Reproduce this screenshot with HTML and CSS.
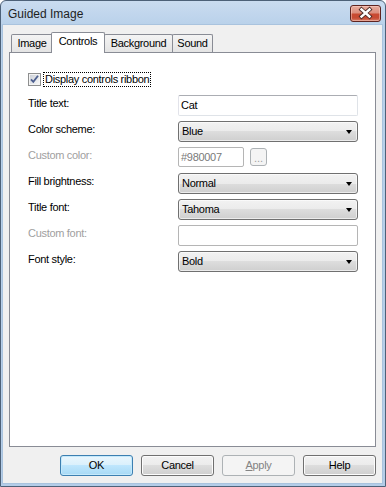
FILE: index.html
```html
<!DOCTYPE html>
<html lang="en">
<head>
  <meta charset="UTF-8" />
  <title>Guided Image</title>
  <link rel="stylesheet" href="styles.css">
</head>
<body>
  <div class="window">
    <div class="titlebar">
      <span class="title">Guided Image</span>
      <div class="close-btn">
        <svg width="31" height="17" viewBox="0 0 31 17">
          <path d="M11.5 4.5 L19.5 11.5 M19.5 4.5 L11.5 11.5" stroke="#4a2a26" stroke-width="4.2" stroke-linecap="square" fill="none"/>
          <path d="M11.5 4.5 L19.5 11.5 M19.5 4.5 L11.5 11.5" stroke="#ffffff" stroke-width="2.4" stroke-linecap="square" fill="none"/>
        </svg>
      </div>
    </div>

    <div class="client">
      <div class="tabs">
        <div class="tab tab-image">Image</div>
        <div class="tab tab-controls active">Controls</div>
        <div class="tab tab-background">Background</div>
        <div class="tab tab-sound">Sound</div>
      </div>

      <div class="panel">
        <div class="check-row">
          <span class="checkbox">
            <svg width="13" height="13" viewBox="0 0 13 13">
              <defs>
                <linearGradient id="cbfill" x1="0" y1="0" x2="1" y2="1">
                  <stop offset="0" stop-color="#cdd1d8"/>
                  <stop offset="1" stop-color="#f7f7f7"/>
                </linearGradient>
              </defs>
              <rect x="0.5" y="0.5" width="12" height="12" fill="#f4f4f4" stroke="#8e8f8f"/>
              <rect x="2" y="2" width="9" height="9" fill="url(#cbfill)"/>
              <path d="M3 6.3 L5.3 8.8 L10 2.8" stroke="#4d5f8f" stroke-width="1.8" fill="none"/>
            </svg>
          </span>
          <span class="check-label">Display controls ribbon</span>
        </div>

        <div class="form">
          <div class="label">Title text:</div>
          <div class="textbox">Cat</div>

          <div class="label">Color scheme:</div>
          <div class="combo"><span>Blue</span><span class="arrow"></span></div>

          <div class="label disabled">Custom color:</div>
          <div class="color-row">
            <div class="textbox small disabled">#980007</div>
            <div class="dots-btn">...</div>
          </div>

          <div class="label">Fill brightness:</div>
          <div class="combo"><span>Normal</span><span class="arrow"></span></div>

          <div class="label">Title font:</div>
          <div class="combo"><span>Tahoma</span><span class="arrow"></span></div>

          <div class="label disabled">Custom font:</div>
          <div class="textbox disabled"></div>

          <div class="label">Font style:</div>
          <div class="combo"><span>Bold</span><span class="arrow"></span></div>
        </div>
      </div>

      <div class="buttons">
        <div class="btn default">OK</div>
        <div class="btn">Cancel</div>
        <div class="btn disabled"><u>A</u>pply</div>
        <div class="btn">Help</div>
      </div>
    </div>
  </div>
</body>
</html>
```

FILE: styles.css
```css
* {
  box-sizing: border-box;
}

body {
  margin: 0;
  background: #fff;
  font-family: "Liberation Sans", Arial, sans-serif;
  font-size: 11px;
  letter-spacing: -0.3px;
  color: #000;
}

.window {
  width: 386px;
  height: 487px;
  border: 1px solid #4d6178;
  border-radius: 6px 6px 0 0;
  background: linear-gradient(#cadcf0, #b9d1ea 24px, #b4cde8);
  display: flex;
  flex-direction: column;
  padding: 0 3px 3px 2px;
}

.titlebar {
  height: 24px;
  display: flex;
  justify-content: space-between;
  align-items: flex-start;
  padding-left: 5px;
}

.title {
  font-size: 12px;
  letter-spacing: 0;
  line-height: 14px;
  margin-top: 6px;
  color: #1e1e1e;
}

.close-btn {
  width: 31px;
  height: 17px;
  margin-top: 4px;
  margin-right: 1px;
  border: 1px solid #5e2420;
  border-radius: 3px;
  background: linear-gradient(#e8ac9e 0%, #dc8f7e 45%, #c94a31 55%, #c64b33 80%, #d9806a 100%);
  box-shadow: inset 0 0 0 1px rgba(255, 220, 210, 0.45);
  display: flex;
  align-items: center;
  justify-content: center;
}

.close-btn svg {
  display: block;
  margin: -1px;
}

.client {
  flex: 1;
  background: #f0f0f0;
  box-shadow: 0 0 0 1px #a9c3de;
  padding: 7px 6px 7px 6px;
  display: flex;
  flex-direction: column;
}

/* tab strip */
.tabs {
  height: 20px;
  display: flex;
  align-items: flex-end;
  padding-left: 2px;
}

.tab {
  height: 18px;
  border: 1px solid #898c95;
  border-bottom: none;
  background: linear-gradient(#f4f4f4, #e4e4e4);
  text-align: center;
  padding-top: 2px;
  line-height: 13px;
  margin-left: -1px;
  border-radius: 2px 2px 0 0;
}

.tab-image {
  width: 42px;
  margin-left: 0;
}

.tab-controls {
  width: 54px;
}

.tab-background {
  width: 69px;
}

.tab-sound {
  width: 41px;
}

.tab.active {
  height: 21px;
  margin-left: -2px;
  margin-bottom: -1px;
  background: #fff;
  position: relative;
  z-index: 1;
}

.panel {
  flex: 1;
  border: 1px solid #898c95;
  background: #fff;
  padding: 19px 0 0 18px;
}

.check-row {
  display: flex;
  align-items: center;
  height: 15px;
}

.checkbox {
  width: 13px;
  height: 13px;
  margin-right: 2px;
}

.checkbox svg {
  display: block;
}

.check-label {
  border: 1px dotted #000;
  padding: 0 1px;
  line-height: 13px;
  height: 15px;
}

.form {
  margin-top: 8px;
  display: grid;
  grid-template-columns: 150px 180px;
  grid-auto-rows: 21px;
  row-gap: 5px;
}

.label {
  padding-top: 2px;
  line-height: 13px;
}

.label.disabled {
  color: #a0a0a0;
}

.textbox {
  border: 1px solid #dfe3e8;
  border-top-color: #abadb3;
  border-left-color: #e2e3ea;
  border-radius: 2px;
  background: #fff;
  padding-left: 2px;
  line-height: 19px;
}

.textbox.disabled {
  border-color: #b5b5b5;
  color: #7a7a7a;
}

.textbox.small {
  width: 66px;
  height: 20px;
  line-height: 18px;
}

.color-row {
  display: flex;
  align-items: flex-start;
}

.dots-btn {
  width: 17px;
  height: 18px;
  margin: 1px 0 0 6px;
  border: 1px solid #adb2b5;
  border-radius: 3px;
  background: #f4f4f4;
  color: #a0a0a0;
  text-align: center;
  line-height: 18px;
  letter-spacing: 0;
}

.combo {
  border: 1px solid #707070;
  border-radius: 3px;
  background: linear-gradient(#f2f2f2 0%, #ebebeb 50%, #dddddd 50%, #cfcfcf 100%);
  box-shadow: inset 0 0 0 1px rgba(255, 255, 255, 0.6);
  display: flex;
  align-items: center;
  justify-content: space-between;
  padding: 0 5px 0 3px;
  line-height: 13px;
}

.arrow {
  width: 0;
  height: 0;
  border-left: 3.5px solid transparent;
  border-right: 3.5px solid transparent;
  border-top: 4px solid #000;
}

/* dialog buttons */
.buttons {
  margin-top: 8px;
  display: flex;
  justify-content: flex-end;
  gap: 8px;
}

.btn {
  width: 73px;
  height: 21px;
  border: 1px solid #707070;
  border-radius: 3px;
  background: linear-gradient(#f2f2f2 0%, #ebebeb 50%, #dddddd 50%, #cfcfcf 100%);
  box-shadow: inset 0 0 0 1px #fcfcfc;
  text-align: center;
  line-height: 19px;
}

.btn.default {
  border-color: #3c7fb1;
  background: linear-gradient(#eaf6fd 0%, #d9f0fc 50%, #bee6fd 50%, #a7d9f5 100%);
  box-shadow: inset 0 0 0 1px #c4e9fb;
}

.btn.disabled {
  border-color: #adb2b5;
  background: #f4f4f4;
  box-shadow: none;
  color: #838383;
}
```
